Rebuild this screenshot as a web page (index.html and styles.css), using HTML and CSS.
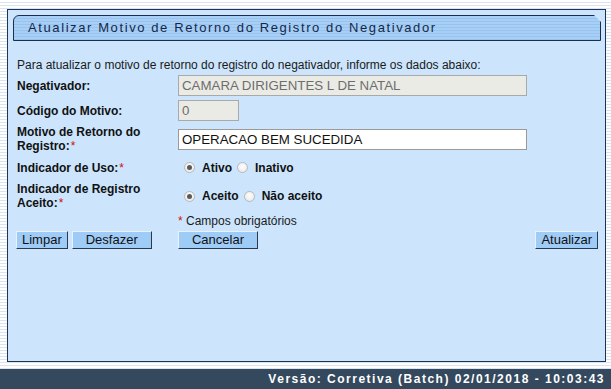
FILE: index.html
```html
<!DOCTYPE html>
<html lang="pt-BR">
<head>
    <meta charset="UTF-8">
    <title>Atualizar Motivo de Retorno do Registro do Negativador</title>
    <link rel="stylesheet" href="styles.css">
</head>
<body>
    <div class="page">
        <div class="panel">
            <div class="panel-title">Atualizar Motivo de Retorno do Registro do Negativador</div>
            <p class="intro">Para atualizar o motivo de retorno do registro do negativador, informe os dados abaixo:</p>
            <div class="form-grid">
                <div class="lbl">Negativador:</div>
                <div class="fld"><input class="txt wide" type="text" value="CAMARA DIRIGENTES L DE NATAL" readonly></div>

                <div class="lbl">Código do Motivo:</div>
                <div class="fld"><input class="txt short" type="text" value="0" readonly></div>

                <div class="lbl">Motivo de Retorno do Registro:<span class="req">*</span></div>
                <div class="fld"><input class="txt wide edit" type="text" value="OPERACAO BEM SUCEDIDA"></div>

                <div class="lbl">Indicador de Uso:<span class="req">*</span></div>
                <div class="fld radios">
                    <span class="radio on"></span><span class="opt">Ativo</span>
                    <span class="radio"></span><span class="opt">Inativo</span>
                </div>

                <div class="lbl">Indicador de Registro Aceito:<span class="req">*</span></div>
                <div class="fld radios">
                    <span class="radio on"></span><span class="opt">Aceito</span>
                    <span class="radio"></span><span class="opt">Não aceito</span>
                </div>

                <div class="lbl"></div>
                <div class="fld note"><span class="req">*</span> Campos obrigatórios</div>
            </div>
            <div class="actions">
                <div class="left-btns">
                    <button class="btn">Limpar</button>
                    <button class="btn w-desfazer">Desfazer</button>
                </div>
                <button class="btn w-cancelar">Cancelar</button>
                <button class="btn push-right">Atualizar</button>
            </div>
        </div>
        <div class="footer">Versão: Corretiva (Batch) 02/01/2018 - 10:03:43</div>
    </div>
</body>
</html>
```

FILE: styles.css
```css
html, body {
    margin: 0;
    padding: 0;
}
body {
    width: 611px;
    height: 389px;
    overflow: hidden;
    font-family: "Liberation Sans", Arial, sans-serif;
    background: repeating-linear-gradient(to bottom, #ffffff 0, #ffffff 2px, #d9e4ee 2px, #d9e4ee 3px);
}
.page {
    display: flex;
    flex-direction: column;
    height: 389px;
}
.panel {
    box-sizing: border-box;
    margin: 9px 5px 0 7px;
    height: 353px;
    background: #cce5fd;
    border: 1px solid #1e3456;
    padding: 5px 5px 0 5px;
}
.panel-title {
    box-sizing: border-box;
    height: 26px;
    margin-right: -1px;
    padding: 0 0 0 14px;
    line-height: 23px;
    font-size: 13px;
    letter-spacing: 1.6px;
    color: #14284a;
    border: 1px solid #1c2e4c;
    border-radius: 6px 0 0 0;
    background: repeating-linear-gradient(to bottom, #a8cff6 0, #a8cff6 2px, #98c3ef 2px, #98c3ef 3px);
    clip-path: polygon(0 0, calc(100% - 7px) 0, 100% 7px, 100% 100%, 0 100%);
}
.intro {
    margin: 17px 0 0 4px;
    font-size: 12px;
    color: #1a1a1a;
}
.form-grid {
    display: grid;
    grid-template-columns: 161px 1fr;
    row-gap: 4px;
    margin: 3px 0 0 4px;
    align-items: center;
}
.lbl {
    font-size: 12px;
    font-weight: bold;
    color: #111111;
    line-height: 14px;
    padding-right: 18px;
}
.req {
    color: #d01010;
    font-weight: normal;
    margin-left: 1px;
}
.note .req {
    margin-left: 0;
}
.txt {
    box-sizing: border-box;
    height: 21px;
    font-family: "Liberation Sans", Arial, sans-serif;
    font-size: 13.3px;
    padding: 0 3px;
    margin: 0;
    color: #6d6d6d;
    background: #ebebe6;
    border: 1px solid #a9a9a9;
    outline: none;
}
.txt.wide {
    width: 349px;
}
.txt.short {
    width: 61px;
}
.txt.edit {
    background: #ffffff;
    color: #111111;
    border-color: #9a9a9a;
}
.radios {
    display: flex;
    align-items: center;
    height: 21px;
    padding-left: 6px;
}
.radio {
    box-sizing: border-box;
    width: 11px;
    height: 11px;
    border-radius: 50%;
    border: 1px solid #b9b9b9;
    background: radial-gradient(circle at 50% 40%, #ffffff 0, #e4e4e4 100%);
    display: flex;
    align-items: center;
    justify-content: center;
}
.radio.on::after {
    content: "";
    width: 5px;
    height: 5px;
    border-radius: 50%;
    background: #5a5a5a;
}
.opt {
    font-size: 12px;
    font-weight: bold;
    color: #111111;
    margin: 0 5px 0 7px;
}
.note {
    font-size: 12px;
    color: #1a1a1a;
    height: 14px;
    line-height: 14px;
}
.actions {
    display: flex;
    align-items: center;
    margin: 3px 2px 0 3px;
}
.left-btns {
    display: flex;
    gap: 4px;
    width: 162px;
}
.btn {
    box-sizing: border-box;
    height: 18px;
    padding: 0 5px;
    font-family: "Liberation Sans", Arial, sans-serif;
    font-size: 13px;
    line-height: 14px;
    color: #111111;
    background: #9fcbf7;
    border: 1px solid;
    border-color: #e8f2fc #2a3a4e #2a3a4e #e8f2fc;
    cursor: pointer;
}
.w-desfazer {
    width: 80px;
}
.w-cancelar {
    width: 80px;
}
.push-right {
    margin-left: auto;
}
.footer {
    margin-top: 7px;
    height: 20px;
    background: #34495e;
    color: #ffffff;
    font-size: 12px;
    font-weight: bold;
    letter-spacing: 1.5px;
    line-height: 20px;
    text-align: right;
    padding-right: 6px;
}
```
